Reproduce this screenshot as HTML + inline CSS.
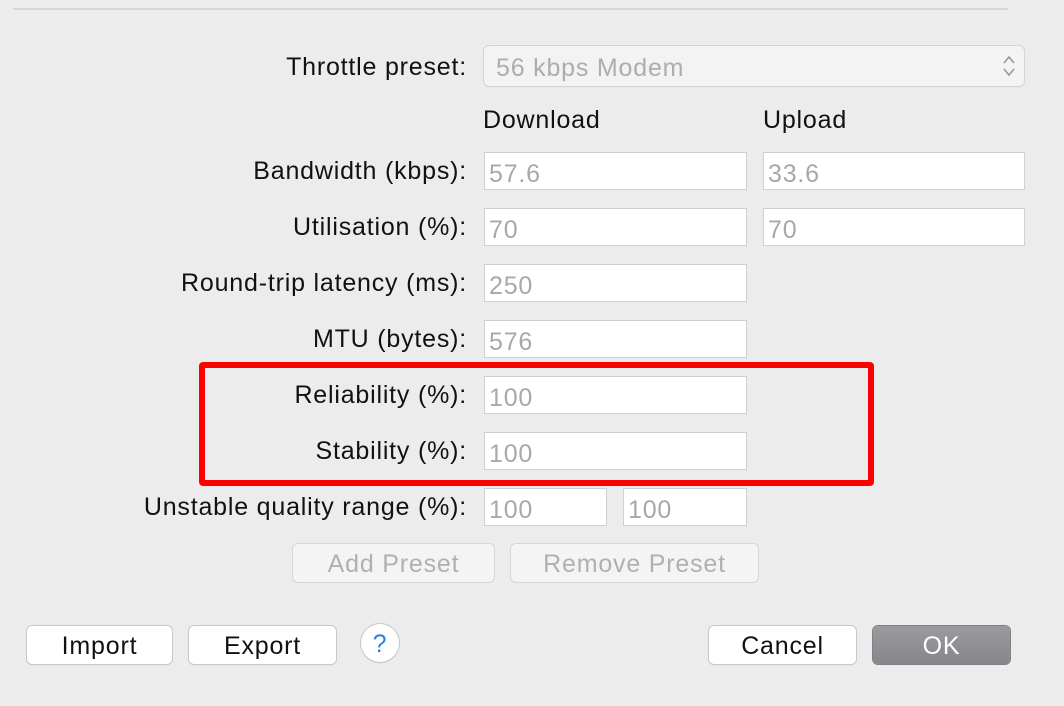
<!DOCTYPE html>
<html><head><meta charset="utf-8"><style>
body{margin:0;width:1064px;height:706px;background:#ececec;font-family:"Liberation Sans",sans-serif;position:relative;overflow:hidden;letter-spacing:0.8px}
.a{position:absolute}
.sep{left:13px;top:8px;width:995px;height:2px;background:#d6d6d6}
.lbl{position:absolute;right:597px;font-size:25px;color:#111;line-height:42px;white-space:nowrap}
.in{position:absolute;height:36px;background:#fff;border:1px solid #cfcfcf;font-size:25px;color:#a8a8a8;line-height:42px;padding-left:4px;box-sizing:content-box}
.hd{position:absolute;top:106px;font-size:25px;color:#111}
.btn{position:absolute;height:38px;background:#fff;border-radius:5px;box-shadow:0 0 0 1px #c8c8c8,0 1px 1px #bbb;font-size:25px;color:#111;text-align:center;line-height:40px}
.dis{background:#f4f4f4;color:#b0b0b0;box-shadow:0 0 0 1px #d6d6d6}
</style></head><body>
<div class="a sep"></div>
<div class="lbl" style="top:46px">Throttle preset:</div>
<div class="a" style="left:484px;top:46px;width:540px;height:40px;background:#f3f3f3;border-radius:5px;box-shadow:0 0 0 1px #d4d4d4,0 1px 1px #ccc;font-size:25px;color:#adadad;line-height:44px;text-indent:12px">56 kbps Modem
<svg class="a" style="right:8px;top:8px" width="14" height="24" viewBox="0 0 14 24"><path d="M2 9L7 3L12 9M2 15L7 21L12 15" fill="none" stroke="#999" stroke-width="1.6"/></svg></div>
<div class="hd" style="left:483px">Download</div>
<div class="hd" style="left:763px">Upload</div>

<div class="lbl" style="top:150px">Bandwidth (kbps):</div>
<div class="in" style="left:484px;top:152px;width:257px">57.6</div>
<div class="in" style="left:763px;top:152px;width:256px">33.6</div>

<div class="lbl" style="top:206px">Utilisation (%):</div>
<div class="in" style="left:484px;top:208px;width:257px">70</div>
<div class="in" style="left:763px;top:208px;width:256px">70</div>

<div class="lbl" style="top:262px">Round-trip latency (ms):</div>
<div class="in" style="left:484px;top:264px;width:257px">250</div>

<div class="lbl" style="top:318px">MTU (bytes):</div>
<div class="in" style="left:484px;top:320px;width:257px">576</div>

<div class="lbl" style="top:374px">Reliability (%):</div>
<div class="in" style="left:484px;top:376px;width:257px">100</div>

<div class="lbl" style="top:430px">Stability (%):</div>
<div class="in" style="left:484px;top:432px;width:257px">100</div>

<div class="lbl" style="top:486px">Unstable quality range (%):</div>
<div class="in" style="left:484px;top:488px;width:117px">100</div>
<div class="in" style="left:623px;top:488px;width:118px">100</div>

<div class="a" style="left:199px;top:362px;width:663px;height:112px;border:6px solid #f00;border-radius:4px"></div>

<div class="btn dis" style="left:293px;top:544px;width:201px">Add Preset</div>
<div class="btn dis" style="left:511px;top:544px;width:247px">Remove Preset</div>

<div class="btn" style="left:27px;top:626px;width:145px">Import</div>
<div class="btn" style="left:189px;top:626px;width:147px">Export</div>
<div class="btn" style="left:361px;top:624px;width:38px;border-radius:50%;color:#2a7ef0">?</div>
<div class="btn" style="left:709px;top:626px;width:147px">Cancel</div>
<div class="btn" style="left:873px;top:626px;width:137px;background:linear-gradient(#9b9a9f,#87868b);color:#fff;box-shadow:0 0 0 1px #808085">OK</div>
</body></html>
